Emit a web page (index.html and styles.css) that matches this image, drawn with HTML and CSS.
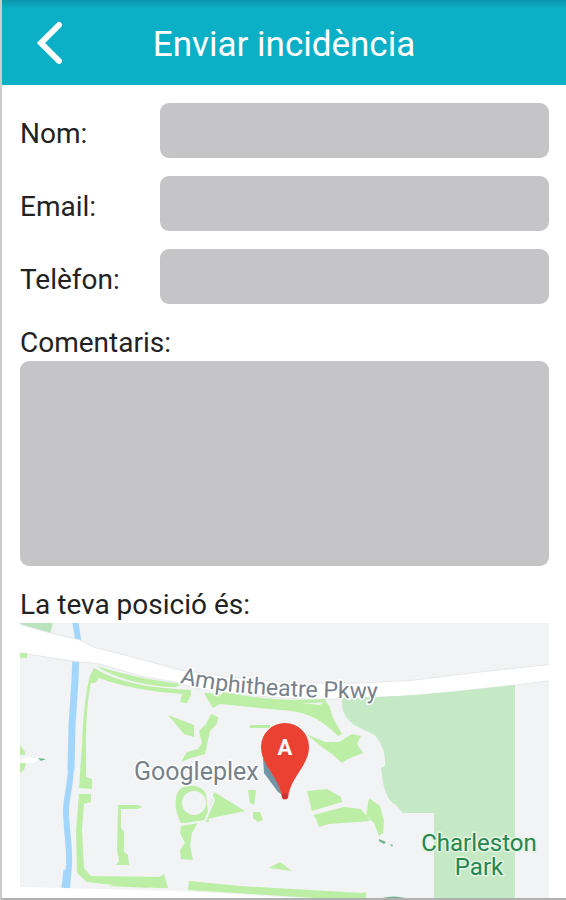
FILE: index.html
```html
<!DOCTYPE html>
<html lang="ca">
<head>
<meta charset="utf-8">
<meta name="viewport" content="width=device-width, initial-scale=1">
<title>Enviar incidència</title>
<link rel="stylesheet" href="styles.css">
</head>
<body>
<div class="screen">
  <header class="topbar">
    <button class="back" type="button" aria-label="Enrere">
      <svg width="28" height="44" viewBox="0 0 28 44" aria-hidden="true"><path d="M23 4 5 22 23 40"/></svg>
    </button>
    <h1 class="title">Enviar incidència</h1>
  </header>
  <form class="form">
    <div class="row">
      <label class="label" for="nom">Nom:</label>
      <input class="field" id="nom" type="text">
    </div>
    <div class="row">
      <label class="label" for="email">Email:</label>
      <input class="field" id="email" type="email">
    </div>
    <div class="row">
      <label class="label" for="telefon">Telèfon:</label>
      <input class="field" id="telefon" type="tel">
    </div>
    <div class="block">
      <label for="comentaris">Comentaris:</label>
      <textarea class="field area" id="comentaris"></textarea>
    </div>
    <div class="block">
      <span>La teva posició és:</span>
      <svg class="map" viewBox="20 623 529 275" role="img" aria-label="Mapa">
        <rect class="land" x="20" y="623" width="529" height="275"/>
        <path class="wood" d="M20 623H53L50 634 20 625Z"/>
        <path class="water" d="M75 620 79 645"/>
        <path class="water wide" d="M76 655 75 680 72 726 71 770"/>
        <path class="water" d="M71 765C71 785 66 798 66 810 66 830 70 845 69 865L67 888"/>
        <path class="water wide" d="M67 870 65 888"/>
        <path class="road" d="M15 623 50 633 80 640 93 647 140 659 180 670 230 677C270 683 340 685 380 682L415 680 480 672 555 664V680L515 685 415 696 380 697 340 699C300 700 250 697 195 688L175 682 140 676 100 664 72 661 15 652Z"/>
        <path class="park" d="M342 698C380 698 430 695 515 685V898H434V813H403L395 804C389 802 384 792 382 776L381 768 385 766C386 750 380 742 375 735L358 727C345 720 341 710 342 698Z"/>
        <g class="grass">
          <path d="M20 653H27V658H20ZM20 745 25 752V755H20ZM20 763H26L24 770 20 773Z"/>
          <path d="M97 666C125 675 150 680 182 684L176 687C150 687 115 679 97 666ZM94 668C120 684 155 688 191 690V695L187 703 180 702 182 694C155 692 122 687 99 678L95 683 91 683C88 695 86 720 86 745V777L92 779V789L79 788 82 745C83 715 86 690 90 676ZM79 794H91V802L84 804 82 830 84 868 91 876 160 877 164 874 168 888 157 888 104 884 87 882 77 873 76 830Z"/>
          <path d="M108 886C125 881 138 884 150 888Z"/>
          <path d="M118 805H138L142 807 138 809H121L121 828 124 832V852L128 855 129 865H116L119 861 117 850Z"/>
          <path d="M168 715 194 725V737L184 734ZM198 749 202 743 199 731 206 724 211 714 218 717 217 724 210 731 205 754 191 758 181 762 187 752Z"/>
          <path fill-rule="evenodd" d="M181 823C174 810 173 792 183 787C193 783 204 787 206 795L209 822ZM194 791A12 12 0 1 0 194 815A12 12 0 1 0 194 791Z"/>
          <path d="M181 826 198 822 192 833 190 846 193 860 181 859 180 850 185 843 180 833Z"/>
          <path d="M214 792 245 811 207 819ZM248 790H256L254 805 250 803ZM253 812 260 812 263 820 258 822 253 818Z"/>
          <path d="M204 693 209 693 257 699 320 705 325 701 329 705 333 718 342 734 338 736C322 720 307 711 280 710L220 704 213 708Z"/>
          <path d="M222 692C260 699 290 701 326 699L325 702C290 706 250 700 222 695Z"/>
          <path d="M250 725H270V728H250ZM306 734 325 742 339 742 352 734 361 736 357 744 363 753 348 759 342 763 332 754 322 747Z"/>
          <path d="M307 791 327 789 341 797 342 802 312 811ZM313 815 344 807 361 809 370 821 329 824 319 827 316 819Z"/>
          <path d="M369 798 380 806 384 821 383 833 379 836 374 823 366 816Z"/>
          <path d="M269 868 280 862 292 871Z"/>
          <path d="M189 881 240 886 362 893 366 892V899H330L188 890Z"/>
        </g>
        <path class="path" d="M206 785 214 800 205 821 180 825"/>
        <path class="shore" d="M20 887 100 889 180 891 330 900H20Z"/>
        <path class="trail" d="M20 760C28 756 33 757 39 759L34 763 20 763Z"/>
        <path class="tree" d="M38 758 46 759 41 761ZM379 839 386 842 384 844 379 841ZM390 844 393 845 392 847ZM382 898Q394 895 405 898Z"/>
        <path class="shadow" d="M263 758 264 773 278 792 284 796 280 775Z"/>
        <path class="pin" d="M285 723A24 24 0 0 1 309 747C309 766 290 777 288 798Q285 801 282 798C280 777 261 766 261 747A24 24 0 0 1 285 723Z"/>
        <circle class="tip" cx="285" cy="796" r="3"/>
        <text class="pin-text" x="285" y="755">A</text>
        <path id="street" class="guide" d="M180 683C220 693 280 698 400 699"/>
        <text class="place small"><textPath href="#street">Amphitheatre Pkwy</textPath></text>
        <text class="place" x="134" y="780">Googleplex</text>
        <text class="place green"><tspan x="479" y="851">Charleston</tspan><tspan x="479" y="875">Park</tspan></text>
      </svg>
    </div>
  </form>
</div>
</body>
</html>
```
FILE: styles.css
```css
* {
  box-sizing: border-box;
}

body {
  margin: 0;
  background: #fff;
  color: #222;
  font-family: Roboto, "Liberation Sans", sans-serif;
  font-size: 28px;
  line-height: 36px;
}

.screen {
  min-height: 100vh;
  border-left: 2px solid #cbcbcb;
  border-bottom: 2px solid #b0b0b0;
}

.topbar {
  display: grid;
  grid-template-columns: 1fr auto 1fr;
  align-items: center;
  padding: 20px 18px;
  background: linear-gradient(#0b94ad, #0bafc6 8px);
  color: #fff;
}

.back {
  display: flex;
  justify-self: start;
  margin: 0 16px;
  padding: 0;
  border: 0;
  background: none;
  cursor: pointer;
}

.back path {
  fill: none;
  stroke: #fff;
  stroke-width: 6;
  stroke-linecap: round;
}

.title {
  margin: 0;
  padding-top: 5px;
  font-size: 35px;
  font-weight: 400;
  line-height: 40px;
}

.form {
  display: flex;
  flex-direction: column;
  gap: 18px;
  padding: 18px 17px 0 18px;
}

.row {
  display: grid;
  grid-template-columns: 140px 1fr;
  align-items: center;
}

.label {
  padding-top: 6px;
}

.field {
  width: 100%;
  height: 55px;
  padding: 0 12px;
  border: 0;
  border-radius: 9px;
  background: #c5c5c7;
  color: inherit;
  font: inherit;
}

.block {
  display: flex;
  flex-direction: column;
  padding-top: 3px;
}

.area {
  height: 205px;
  padding: 12px;
  resize: none;
}

.map {
  display: block;
  width: 100%;
  height: auto;
}

.land { fill: #f1f3f4; }
.wood { fill: #b9e3bd; }
.park { fill: #c5e8c5; }
.grass { fill: #bdeea6; }
.tree { fill: #70b58e; }
.shore, .trail { fill: #fff; }
.shadow { fill: #7096a5; }
.pin { fill: #ea4132; }
.tip { fill: #c93431; }

.water, .path, .guide {
  fill: none;
}

.water {
  stroke: #a2d6fc;
  stroke-width: 6;
}

.wide { stroke-width: 7; }

.road {
  fill: #fff;
  stroke: #e6e8ea;
  stroke-width: 1;
}

.path {
  stroke: #f1f3f4;
  stroke-width: 2;
}

.place {
  fill: #76818a;
  stroke: #fff;
  stroke-width: 3;
  stroke-linejoin: round;
  paint-order: stroke;
  font-size: 25px;
}

.small { font-size: 23px; }

.green {
  fill: #27864f;
  stroke: #e5f5e5;
  font-size: 24px;
  text-anchor: middle;
}

.pin-text {
  fill: #fff;
  font-size: 22px;
  font-weight: 700;
  text-anchor: middle;
}
```
